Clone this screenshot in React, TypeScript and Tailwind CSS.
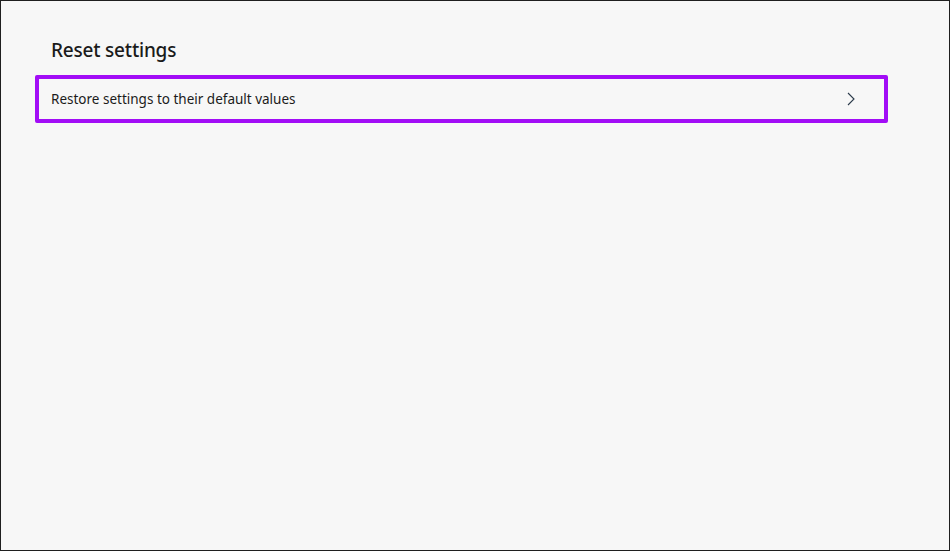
import React from 'react';

const App: React.FC = () => {
  return (
    <div
      className="w-[950px] h-[551px] border border-[#1f1f1f] bg-[#f7f7f7] text-[#1b1b1b] overflow-hidden"
      style={{ fontFamily: '"Noto Sans", "Open Sans", sans-serif' }}
    >
      <div className="pl-[34px] pr-[61px] pt-[36px]">
        {/* Section heading */}
        <h2 className="pl-4 text-[19px] leading-[26px] font-medium tracking-[-0.2px] mb-[12px]">
          Reset settings
        </h2>

        {/* Highlighted row */}
        <button className="w-full h-[48px] flex items-center justify-between border-4 border-[#a20df6] rounded-[2px] pl-3 pr-[29px] text-left">
          <span className="text-[13.5px] leading-[18px] font-normal text-[#1b1b1b]">
            Restore settings to their default values
          </span>
          <svg width="8" height="14" viewBox="0 0 8 14" fill="none">
            <path d="M1 1 L7 7 L1 13" stroke="#2b3a4a" strokeWidth="1.1" />
          </svg>
        </button>
      </div>
    </div>
  );
};

export default App;
